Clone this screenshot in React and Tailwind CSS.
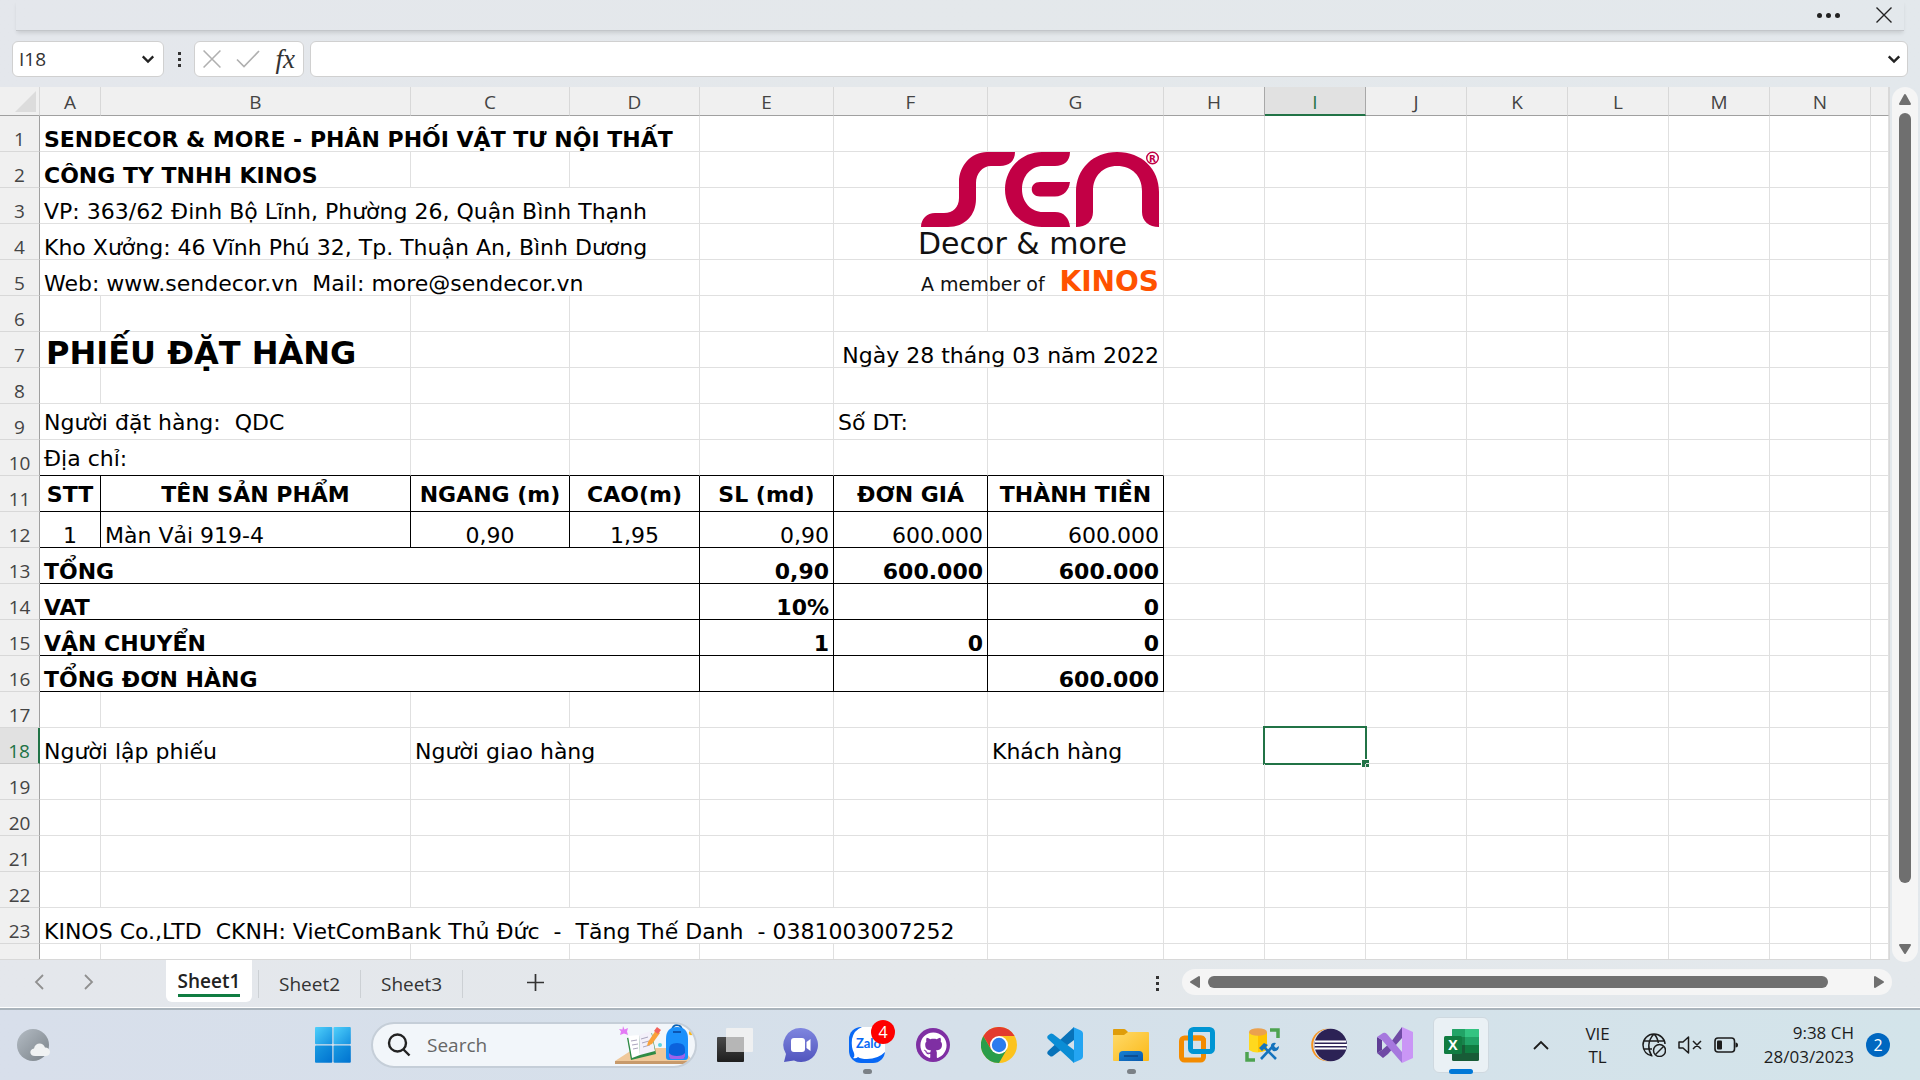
import React from "react";
import { FaGithub } from "react-icons/fa";

const SHEET_FONT = "font-['DejaVu_Sans',Verdana,sans-serif]";
const UI_FONT = "font-['Open_Sans','Noto_Sans',sans-serif]";

const columns = [
  { name: "A", width: "w-[61px]" },
  { name: "B", width: "w-[310px]" },
  { name: "C", width: "w-[159px]" },
  { name: "D", width: "w-[130px]" },
  { name: "E", width: "w-[134px]" },
  { name: "F", width: "w-[154px]" },
  { name: "G", width: "w-[176px]" },
  { name: "H", width: "w-[101px]" },
  { name: "I", width: "w-[101px]" },
  { name: "J", width: "w-[101px]" },
  { name: "K", width: "w-[101px]" },
  { name: "L", width: "w-[101px]" },
  { name: "M", width: "w-[101px]" },
  { name: "N", width: "w-[101px]" },
  { name: "", width: "" },
];

const c = (text, options = {}) => ({ text, span: 1, ...options });
const ruled = (text, options = {}) => c(text, { right: true, bottom: true, ...options });
const underlined = (text, options = {}) => c(text, { bottom: true, ...options });
const center = { align: "center" };
const head = { align: "center", bold: true, middle: true };
const boldRight = { align: "right", bold: true };

const rows = {
  1: [c("SENDECOR & MORE - PHÂN PHỐI VẬT TƯ NỘI THẤT", { span: 4, bold: true })],
  2: [c("CÔNG TY TNHH KINOS", { span: 2, bold: true })],
  3: [c("VP: 363/62 Đinh Bộ Lĩnh, Phường 26, Quận Bình Thạnh", { span: 4 })],
  4: [c("Kho Xưởng: 46 Vĩnh Phú 32, Tp. Thuận An, Bình Dương", { span: 4 })],
  5: [c("Web: www.sendecor.vn  Mail: more@sendecor.vn", { span: 4 })],
  7: [
    c("PHIẾU ĐẶT HÀNG", { span: 2, title: true, bold: true }),
    c(""),
    c(""),
    c(""),
    c("Ngày 28 tháng 03 năm 2022", { span: 2, align: "right" }),
  ],
  9: [
    c("Người đặt hàng:  QDC", { span: 2, middle: true }),
    c(""),
    c(""),
    c(""),
    c("Số DT:", { middle: true }),
  ],
  10: [
    underlined("Địa chỉ:", { span: 2, middle: true }),
    underlined(""),
    underlined(""),
    underlined(""),
    underlined(""),
    underlined(""),
  ],
  11: [
    ruled("STT", head),
    ruled("TÊN SẢN PHẨM", head),
    ruled("NGANG (m)", head),
    ruled("CAO(m)", head),
    ruled("SL (md)", head),
    ruled("ĐƠN GIÁ", head),
    ruled("THÀNH TIỀN", head),
  ],
  12: [
    ruled("1", center),
    ruled("Màn Vải 919-4"),
    ruled("0,90", center),
    ruled("1,95", center),
    ruled("0,90", { align: "right" }),
    ruled("600.000", { align: "right" }),
    ruled("600.000", { align: "right" }),
  ],
  13: [
    ruled("TỔNG", { span: 4, bold: true }),
    ruled("0,90", boldRight),
    ruled("600.000", boldRight),
    ruled("600.000", boldRight),
  ],
  14: [
    ruled("VAT", { span: 4, bold: true }),
    ruled("10%", boldRight),
    ruled(""),
    ruled("0", boldRight),
  ],
  15: [
    ruled("VẬN CHUYỂN", { span: 4, bold: true }),
    ruled("1", boldRight),
    ruled("0", boldRight),
    ruled("0", boldRight),
  ],
  16: [
    ruled("TỔNG ĐƠN HÀNG", { span: 4, bold: true }),
    ruled(""),
    ruled(""),
    ruled("600.000", boldRight),
  ],
  18: [
    c("Người lập phiếu", { span: 2 }),
    c("Người giao hàng", { span: 2 }),
    c(""),
    c(""),
    c("Khách hàng"),
    c(""),
    c("", { selected: true }),
  ],
  23: [c("KINOS Co.,LTD  CKNH: VietComBank Thủ Đức  -  Tăng Thế Danh  - 0381003007252", { span: 6 })],
};

function fillRow(n) {
  const cells = [...(rows[n] || [])];
  let used = cells.reduce((sum, cell) => sum + cell.span, 0);
  while (used < columns.length) {
    cells.push(c(""));
    used += 1;
  }
  return cells;
}

function Cell({ cell }) {
  const border = `${cell.right ? "border-r-black" : "border-r-[#e0e0e0]"} ${cell.bottom ? "border-b-black" : "border-b-[#e0e0e0]"}`;
  const justify =
    cell.align === "center" ? "justify-center" : cell.align === "right" ? "justify-end" : "justify-start";
  const vertical = cell.middle ? "items-center pt-0.5" : "items-end";
  const size = cell.title ? "text-[32px] leading-7 pl-1.5" : "text-[22px] leading-[22px] px-1";
  return (
    <td colSpan={cell.span} className={`relative border-r border-b p-0 ${border}`}>
      <div className={`flex h-[35px] whitespace-pre text-black ${justify} ${vertical} ${size} ${cell.bold ? "font-bold" : ""}`}>
        {cell.text}
      </div>
      {cell.selected && (
        <div className="absolute -left-0.5 -top-0.5 -right-0.5 -bottom-0.5 border-2 border-[#217346]">
          <span className="absolute -right-1 -bottom-1 size-2 border-t border-l border-white bg-[#217346]" />
        </div>
      )}
    </td>
  );
}

function SenLogo() {
  return (
    <svg className="absolute left-[921px] top-[65px] h-[146px] w-[242px] overflow-visible" viewBox="0 0 242 146" role="img" aria-label="SEN Decor & more">
      <g fill="#c20045">
        <path d="M94 0H66C50 0 38 14 38 30V46C38 55 32 61 23 61H14C6 61 0 67 0 75H27C44 75 55 63 55 47V31C55 22 61 14 70 14H79C88 14 94 9 94 0Z" />
        <path d="M149 0H121C100 0 84 17 84 37.500C84 58 100 75 121 75H149C148 66 143 60 134 60H122C110 60 101 50 101 37.500C101 24 110 14 122 14H134C143 14 149 9 149 0Z" />
        <path d="M149 30H119C108 30 108 44.500 119 44.500H134C143 44.500 148 38 149 30Z" />
        <path d="M155 75V40C155 17 172 0 196 0C221 0 238 17 238 40V75C228 75 221 69 221 60V39C221 24 211 14 196 14C182 14 172 24 172 39V60C172 69 165 75 155 75Z" />
      </g>
      <circle cx="231.500" cy="6" r="5.800" fill="white" stroke="#c20045" strokeWidth="1.400" />
      <text x="231.500" y="9.500" textAnchor="middle" fontSize="9" fontWeight="700" fontFamily="DejaVu Sans" fill="#c20045">R</text>
      <text x="-3" y="102" fontSize="30" fontFamily="DejaVu Sans" fill="#111">Decor &amp; more</text>
      <text x="0" y="139" fontSize="19" fontFamily="DejaVu Sans" fill="#111">A member of</text>
      <text x="238" y="139" textAnchor="end" fontSize="28" fontWeight="700" fontFamily="DejaVu Sans" fill="#ff5200">KINOS</text>
    </svg>
  );
}

function Chevron({ d, className, width = 2 }) {
  return (
    <svg className={className} viewBox="0 0 16 16" fill="none" stroke="currentColor" strokeWidth={width} aria-hidden="true">
      <path d={d} />
    </svg>
  );
}

function Arrow({ points, className }) {
  return (
    <svg className={className} viewBox="0 0 14 14" fill="#6f6f6f" stroke="#6f6f6f" strokeWidth="2" strokeLinejoin="round" aria-hidden="true">
      <polygon points={points} />
    </svg>
  );
}

function VerticalDots() {
  return (
    <span className="flex flex-col gap-[3px]">
      <span className="size-[3px] bg-[#333]" />
      <span className="size-[3px] bg-[#333]" />
      <span className="size-[3px] bg-[#333]" />
    </span>
  );
}

function TitleStrip() {
  return (
    <header className="mx-4 flex h-[31px] shrink-0 items-center justify-end gap-9 border-b border-[#c3c6ca] pr-3 shadow-[0_3px_4px_-1px_rgba(0,0,0,0.12)]">
      <button aria-label="More options" className="flex gap-1">
        <span className="size-[5px] rounded-full bg-[#222]" />
        <span className="size-[5px] rounded-full bg-[#222]" />
        <span className="size-[5px] rounded-full bg-[#222]" />
      </button>
      <button aria-label="Close" className="text-[#222]">
        <Chevron d="M0.500 0.500 15.500 15.500M15.500 0.500 0.500 15.500" width={1.4} className="size-4" />
      </button>
    </header>
  );
}

function FormulaBar() {
  return (
    <div className="flex h-14 shrink-0 items-center px-3">
      <div className="flex h-9 w-[152px] items-center rounded-md border border-[#d0d0d0] bg-white pr-2">
        <input aria-label="Name box" defaultValue="I18" className="w-full min-w-0 bg-transparent pl-1.5 text-[19px] text-[#333] outline-none" />
        <button aria-label="Open name list" className="text-[#222]">
          <Chevron d="M2 5 8 11 14 5" width={2.6} className="size-3.5" />
        </button>
      </div>
      <div className="flex w-[30px] justify-center"><VerticalDots /></div>
      <div className="flex h-9 w-[110px] items-center justify-between rounded-md border border-[#d0d0d0] bg-white px-2">
        <button aria-label="Cancel" className="text-[#b0b0b0]">
          <Chevron d="M0.500 0.500 15.500 15.500M15.500 0.500 0.500 15.500" width={1.4} className="size-[18px]" />
        </button>
        <button aria-label="Enter" className="text-[#b0b0b0]">
          <svg className="h-[18px] w-6" viewBox="0 0 24 18" fill="none" stroke="currentColor" strokeWidth="1.700" aria-hidden="true"><path d="M1 9.500 8 16.500 23 1" /></svg>
        </button>
        <button aria-label="Insert function" className="font-['Liberation_Serif',serif] text-[27px] leading-7 italic font-medium text-[#333]">fx</button>
      </div>
      <div className="ml-1.5 flex h-9 flex-1 items-center rounded-md border border-[#d0d0d0] bg-white pr-1.5">
        <input aria-label="Formula bar" className="w-full bg-transparent px-2 text-[19px] outline-none" />
        <button aria-label="Expand formula bar" className="text-[#222]">
          <Chevron d="M2 5 8 11 14 5" width={2.8} className="size-3.5" />
        </button>
      </div>
    </div>
  );
}

function Sheet() {
  return (
    <main className="flex min-h-0 flex-1">
      <div className="relative min-w-0 flex-1 overflow-hidden border-r border-b border-[#d8d8d8] bg-white">
        <table className={`w-full table-fixed border-separate border-spacing-0 ${SHEET_FONT}`}>
          <colgroup>
            <col className="w-10" />
            {columns.map((col, i) => <col key={i} className={col.width} />)}
          </colgroup>
          <thead>
            <tr className={`${UI_FONT} text-[19px] text-[#444]`}>
              <th className="h-[29px] border-r border-b border-r-[#d8d8d8] border-b-[#a0a0a0] bg-[#f0f0f0] p-0">
                <svg className="ml-auto mr-[3px] size-[21px]" viewBox="0 0 21 21" aria-hidden="true"><path d="M21 0V21H0Z" fill="#dcdcdc" /></svg>
              </th>
              {columns.map((col, i) => (
                <th
                  key={i}
                  className={
                    col.name === "I"
                      ? "border-r border-b-2 border-r-[#a8a8a8] border-b-[#217346] bg-[#e1e1e1] p-0 pt-0.5 font-normal leading-6 text-[#217346]"
                      : `border-r border-b border-b-[#a0a0a0] bg-[#f0f0f0] p-0 pt-0.5 font-normal leading-6 ${col.name === "H" ? "border-r-[#a8a8a8]" : "border-r-[#d8d8d8]"}`
                  }
                >
                  {col.name}
                </th>
              ))}
            </tr>
          </thead>
          <tbody>
            {Array.from({ length: 24 }, (_, i) => i + 1).map((n) => (
              <tr key={n}>
                <th
                  className={
                    n === 18
                      ? `border-r-2 border-b border-r-[#217346] border-b-[#c8c8c8] bg-[#e1e1e1] p-0 font-normal text-[#217346] ${UI_FONT}`
                      : `border-r border-b border-r-[#a0a0a0] border-b-[#d8d8d8] bg-[#f0f0f0] p-0 font-normal text-[#444] ${UI_FONT}`
                  }
                >
                  <div className="flex h-[35px] items-end justify-center text-[19px] leading-6">{n < 24 ? n : ""}</div>
                </th>
                {fillRow(n).map((cell, i) => <Cell key={i} cell={cell} />)}
              </tr>
            ))}
          </tbody>
        </table>
        <SenLogo />
      </div>
      <div className="ml-0.5 mr-0.5 -mb-0.5 flex w-[26px] flex-col items-center rounded-full bg-[#f5f5f5] py-1.5">
        <Arrow points="7,2 12,11 2,11" className="size-3.5" />
        <div className="mt-1.5 w-3 flex-[770] rounded-full bg-[#6f6f6f]" />
        <div className="flex-[59]" />
        <Arrow points="2,3 12,3 7,11" className="size-3.5" />
      </div>
    </main>
  );
}

function SheetTabs() {
  return (
    <nav aria-label="Sheets" className="flex h-12 shrink-0 items-start border-b border-white">
      <div className="flex w-[166px] items-center gap-8 pt-3.5 pl-8 text-[#909090]">
        <button aria-label="Previous sheet"><Chevron d="M11 1 4 8 11 15" width={1.8} className="size-4" /></button>
        <button aria-label="Next sheet"><Chevron d="M5 1 12 8 5 15" width={1.8} className="size-4" /></button>
      </div>
      <button className="flex h-[42px] w-[86px] items-start justify-center rounded-b-md bg-white pt-2 text-[19px] leading-[26px] font-semibold text-[#222]">
        <span className="block border-b-3 border-[#107c41]">Sheet1</span>
      </button>
      <button className="mt-2.5 ml-1.5 h-7 w-[103px] border-x border-[#ccd0d4] text-[19px] leading-7 text-[#333]">Sheet2</button>
      <button className="mt-2.5 h-7 w-[102px] border-r border-[#ccd0d4] text-[19px] leading-7 text-[#333]">Sheet3</button>
      <button aria-label="New sheet" className="mt-3.5 ml-16 text-[#333]">
        <Chevron d="M8 0V16M0 8H16" width={1.6} className="size-[17px]" />
      </button>
      <div className="ml-auto mt-4"><VerticalDots /></div>
      <div className="mt-[9px] mr-7 ml-[23px] flex h-[26px] w-[37%] items-center rounded-full bg-[#f5f5f5] px-1.5">
        <Arrow points="3,7 11,2 11,12" className="size-3.5" />
        <div className="ml-1.5 h-3 flex-[622] rounded-full bg-[#6f6f6f]" />
        <div className="flex-[44]" />
        <Arrow points="11,7 3,2 3,12" className="size-3.5" />
      </div>
    </nav>
  );
}

function WindowsIcon() {
  return (
    <svg viewBox="0 0 36 36" className="size-9" aria-hidden="true">
      <defs>
        <linearGradient id="win" x1="0" y1="0" x2="1" y2="1"><stop stopColor="#4fd0fb" /><stop offset="1" stopColor="#1691e0" /></linearGradient>
        <linearGradient id="win2" x1="0" y1="0" x2="1" y2="1"><stop stopColor="#199be2" /><stop offset="1" stopColor="#0072d0" /></linearGradient>
      </defs>
      <rect x="0" y="0" width="17.300" height="17.300" rx="1" fill="url(#win)" />
      <rect x="18.500" y="0" width="17.300" height="17.300" rx="1" fill="url(#win)" />
      <rect x="0" y="18.500" width="17.300" height="17.300" rx="1" fill="url(#win2)" />
      <rect x="18.500" y="18.500" width="17.300" height="17.300" rx="1" fill="url(#win2)" />
    </svg>
  );
}

function WeatherIcon() {
  return (
    <svg viewBox="0 0 36 34" className="h-[34px] w-9" aria-hidden="true">
      <defs><linearGradient id="moon" x1="0" y1="0" x2="1" y2="1"><stop stopColor="#b4bcc4" /><stop offset="1" stopColor="#7a8289" /></linearGradient></defs>
      <circle cx="17" cy="17" r="16" fill="url(#moon)" />
      <path d="M19 28c-6 0-6-7-1-7.500 1-6 9-7 11-1 6 0 7 8 1 8.500z" fill="#f0f2f3" />
    </svg>
  );
}

function SearchArt() {
  return (
    <svg viewBox="0 0 80 42" className="h-[42px] w-20 shrink-0" aria-hidden="true">
      <path d="M0 37 20 24H67L78 37Z" fill="#f0c99b" />
      <path d="M0 37H78L72 40H0Z" fill="#c79a6c" />
      <path d="m12 14 4 22 25-6-4-21z" fill="#2f8b45" />
      <path d="m13 12 11-1 1 20-8 3z" fill="#fff" />
      <path d="m24 11 12-4 4 20-15 4z" fill="#f3f0fa" />
      <path d="m16 17 6-1m-5 5 6-1m-5 5 5-1m3-9 7-2m-6 6 7-2m-6 6 7-2" stroke="#aaa5bd" strokeWidth="1" />
      <path d="m33 18 8-12 4 3-8 11-5 2z" fill="#f9a13a" />
      <path d="m39 7 3-4 4 3-3 4z" fill="#f3625c" />
      <path d="m8 2 1.500 3.500L13 4l-1 3.500 1 3.500-4-1.500L5 11l1-3.500L4 5l3.500.500z" fill="#e37bf5" />
      <path d="M57 7c0-8 10-8 10 0" fill="none" stroke="#0c63b5" strokeWidth="2" />
      <path d="M51 15Q51 3 62 3T73 15V33Q73 36 70 36H54Q51 36 51 33Z" fill="#1a90fb" />
      <path d="M54 25q0-6 8-6t8 6v9H54z" fill="#0b62dc" />
      <path d="M54 29q2 3 8 3t8-3v3q0 3-3 3H57q-3 0-3-3z" fill="#a063ea" />
      <path d="M58 8h8" stroke="#0b55b2" strokeWidth="2" />
      <circle cx="76" cy="9" r="2.200" fill="#f8b51b" />
      <circle cx="45" cy="21" r="2" fill="#5cd3e2" />
    </svg>
  );
}

function TaskViewIcon() {
  return (
    <svg viewBox="0 0 36 36" className="size-9" aria-hidden="true">
      <defs><linearGradient id="tv" x1="0" y1="0" x2="0" y2="1"><stop stopColor="#4a4a4a" /><stop offset="1" stopColor="#1e1e1e" /></linearGradient></defs>
      <rect x="0" y="10" width="27" height="25" rx="1" fill="url(#tv)" />
      <rect x="9" y="1" width="27" height="24" rx="1" fill="#f1f1f1" opacity=".92" />
      <rect x="9" y="10" width="18" height="15" fill="#b6b6b6" />
    </svg>
  );
}

function ChatIcon() {
  return (
    <svg viewBox="0 0 36 36" className="size-9" aria-hidden="true">
      <defs><linearGradient id="chat" x1="0" y1="0" x2="0" y2="1"><stop stopColor="#7f86df" /><stop offset="1" stopColor="#5155be" /></linearGradient></defs>
      <path d="M18 1a17 17 0 1 1-7 32.500L1 35l2-8A17 17 0 0 1 18 1z" fill="url(#chat)" />
      <rect x="8" y="11" width="14" height="14" rx="3" fill="white" />
      <path d="m23.500 15 4-3v12l-4-3z" fill="white" />
    </svg>
  );
}

function ZaloIcon() {
  return (
    <svg viewBox="0 0 36 36" className="size-9" aria-hidden="true">
      <rect width="36" height="36" rx="12" fill="#0868f5" />
      <path d="M13 0H24Q36 0 36 12V25Q29 32 18 32Q12 32 9 30Q7 32 4 31Q6 30 5 26Q2 20 3 12Q5 3 13 0Z" fill="white" />
      <text x="19.500" y="21" textAnchor="middle" fontFamily="Lato, sans-serif" fontSize="13" fontWeight="700" fill="#0868f5">Zalo</text>
    </svg>
  );
}

function GithubIcon() {
  return (
    <span className="flex size-[34px] items-center justify-center rounded-full bg-[#7f2fa3]">
      <FaGithub className="size-[27px] text-white" />
    </span>
  );
}

function ChromeIcon() {
  return (
    <svg viewBox="0 0 36 36" className="size-9" aria-hidden="true">
      <circle cx="18" cy="18" r="18" fill="#fcc31e" />
      <path d="M2.400 9A18 18 0 0 0 18 36L25.800 22.500 18 27 10.200 22.500Z" fill="#2a9d4a" />
      <path d="M2.400 9A18 18 0 0 1 33.600 9H18L10.200 22.500Z" fill="#e33b2e" />
      <circle cx="18" cy="18" r="9" fill="white" />
      <circle cx="18" cy="18" r="7.200" fill="#2c7cee" />
    </svg>
  );
}

function VsCodeIcon() {
  return (
    <svg viewBox="0 0 36 36" className="size-9" aria-hidden="true">
      <path d="M27 0 1 24Q-.500 26 1 27.500L3 29Q4 30 6 29L27 13Z" fill="#0872b9" />
      <path d="M27 36 1 12Q-.500 10 1 8.500L3 7Q4 6 6 7L27 23Z" fill="#0b8dd5" />
      <path d="m26 0 8 3.500q2 1 2 3v23q0 2-2 3L26 36q1-1 1-3V3q0-2-1-3z" fill="#24a5f2" />
    </svg>
  );
}

function ExplorerIcon() {
  return (
    <svg viewBox="0 0 36 36" className="size-9" aria-hidden="true">
      <defs>
        <linearGradient id="folder" x1="0" y1="0" x2="1" y2="1"><stop stopColor="#ffda69" /><stop offset="1" stopColor="#fbb919" /></linearGradient>
        <linearGradient id="folderTag" x1="0" y1="0" x2="1" y2="1"><stop stopColor="#1681d4" /><stop offset="1" stopColor="#0a5aad" /></linearGradient>
      </defs>
      <path d="M0 3q0-1 1-1h10q1 0 2 1l3 3v4H0z" fill="#df9d0a" />
      <path d="M0 8h11l4-3h20q1 0 1 1v27q0 1-1 1H1q-1 0-1-1z" fill="url(#folder)" />
      <path d="M6 34v-6q0-4 4-4h16q4 0 4 4v6z" fill="url(#folderTag)" />
      <path d="M11 29h14" stroke="#0b4484" strokeWidth="1.500" />
    </svg>
  );
}

function VmwareIcon() {
  return (
    <svg viewBox="0 0 36 36" className="size-9" fill="none" strokeWidth="5" aria-hidden="true">
      <rect x="2.500" y="11" width="22" height="22" rx="3" stroke="#f38b00" />
      <rect x="11.500" y="2.500" width="22" height="22" rx="3" stroke="#0095d3" />
      <path d="M14 11h8q2.500 0 2.500 3v5" stroke="#f38b00" />
    </svg>
  );
}

function DatabaseToolIcon() {
  return (
    <svg viewBox="0 0 36 36" className="size-9" aria-hidden="true">
      <path d="M4 5v18q8 5 17 0V5z" fill="#ffd91e" />
      <path d="M13 8v17q5 0 9-2V5z" fill="#ffc400" />
      <ellipse cx="13" cy="5" rx="9" ry="3.800" fill="#eba14e" />
      <path d="M25 3h8v8M2 25v8h8" fill="none" stroke="#4da350" strokeWidth="3.500" />
      <path d="m16 32 12-13m3 13L18 19" stroke="#1473bd" strokeWidth="2.600" />
      <path d="m14 21 5-5 4 2-6 6zM26 21q-1-6 5-5l-2 3 2 2 3-2q0 6-6 5z" fill="#1473bd" />
    </svg>
  );
}

function EclipseIcon() {
  return (
    <svg viewBox="0 0 36 36" className="size-9" aria-hidden="true">
      <circle cx="16.500" cy="18" r="16.300" fill="#f7931e" />
      <circle cx="18.500" cy="18" r="16.300" fill="#d9dfea" />
      <circle cx="19.700" cy="18" r="16.200" fill="#2c2255" />
      <path d="M4 14.500h31M3.500 18H36M4 21.500h31" stroke="white" strokeWidth="2" />
    </svg>
  );
}

function VisualStudioIcon() {
  return (
    <svg viewBox="0 0 36 36" className="size-9" aria-hidden="true">
      <path d="M25 0 14 15 5 23 0 26 6 31 11 27 25 11Z" fill="#6f4aa5" />
      <path d="M0 10 5 13V23L0 26Z" fill="#5f3d95" />
      <path d="M0 10 6 6Q8 5 10 7L25 25V36L5 13Z" fill="#a678de" />
      <path d="M25 0 36 5V31L25 36Z" fill="#ca96f6" />
    </svg>
  );
}

function ExcelIcon() {
  return (
    <svg viewBox="0 0 36 36" className="size-9" aria-hidden="true">
      <rect x="9" y="2" width="27" height="32" rx="1.500" fill="#185c37" />
      <path d="M9 3q0-1 1-1h12v8H9z" fill="#21a366" />
      <path d="M22 2h13q1 0 1 1v7H22z" fill="#33c481" />
      <path d="M9 10h13v8H9z" fill="#18834b" />
      <path d="M22 10h14v8H22z" fill="#21a366" />
      <path d="M22 18h14v8H22z" fill="#107c41" />
      <rect x="1" y="9" width="18" height="18" rx="1.500" fill="#107c41" />
      <text x="10" y="23" textAnchor="middle" fontFamily="Open Sans, sans-serif" fontSize="14" fontWeight="700" fill="white">X</text>
    </svg>
  );
}

const apps = [
  { name: "Task View", icon: <TaskViewIcon /> },
  { name: "Chat", icon: <ChatIcon /> },
  { name: "Zalo", icon: <ZaloIcon />, badge: "4", running: true },
  { name: "GitHub Desktop", icon: <GithubIcon /> },
  { name: "Chrome", icon: <ChromeIcon /> },
  { name: "Visual Studio Code", icon: <VsCodeIcon /> },
  { name: "File Explorer", icon: <ExplorerIcon />, running: true },
  { name: "VMware", icon: <VmwareIcon /> },
  { name: "Database tools", icon: <DatabaseToolIcon /> },
  { name: "Eclipse", icon: <EclipseIcon /> },
  { name: "Visual Studio", icon: <VisualStudioIcon /> },
  { name: "Excel", icon: <ExcelIcon />, active: true },
];

function AppButton({ app }) {
  return (
    <button
      aria-label={app.name}
      className={`relative flex size-14 items-center justify-center rounded-md ${app.active ? "border border-[#cfd9e0] bg-[#eaf1f5]" : ""}`}
    >
      {app.icon}
      {app.badge && (
        <span className="absolute right-0 top-[3px] flex size-6 items-center justify-center rounded-full bg-[#fe0000] text-base text-white">
          {app.badge}
        </span>
      )}
      {app.running && <span className="absolute -bottom-px h-[5px] w-[9px] rounded-full bg-[#7b8187]" />}
      {app.active && <span className="absolute -bottom-0.5 h-[5px] w-6 rounded-full bg-[#0078d7]" />}
    </button>
  );
}

function TrayIcons() {
  return (
    <div className="flex items-center gap-3 text-[#1c1c1c]">
      <svg viewBox="0 0 24 24" className="size-6" fill="none" stroke="currentColor" strokeWidth="1.500" aria-label="No internet">
        <path d="M10.500 23C5 22 1 18 1 12 1 6 6 1 12 1s11 5 11 10M2 8h20M2 16h8M12 1C5 8 6 17 9.500 22.500M12 1c3 3 4 6 4.300 9" />
        <circle cx="17.500" cy="17.500" r="6" />
        <path d="m13.500 21.500 8-8" />
      </svg>
      <svg viewBox="0 0 24 24" className="size-6" fill="none" stroke="currentColor" strokeWidth="1.500" strokeLinejoin="round" aria-label="Muted">
        <path d="M1 9h4l5.500-5v16L5 15H1zM15 8l8 8M23 8l-8 8" />
      </svg>
      <svg viewBox="0 0 24 24" className="size-6" aria-label="Battery">
        <rect x="1" y="5" width="19.500" height="14" rx="3" fill="none" stroke="currentColor" strokeWidth="1.600" />
        <rect x="3" y="7.500" width="5" height="9" rx="1" fill="currentColor" />
        <path d="M21.500 9.500q2.500 0 2.500 2.500t-2.500 2.500z" fill="currentColor" />
      </svg>
    </div>
  );
}

function Taskbar() {
  return (
    <footer className="flex h-[72px] shrink-0 items-center justify-between border-t-2 border-[#a9b3bb] bg-linear-to-r from-[#d8dfeb] via-[#d5e0ea] to-[#d3e4ea] pl-4 pr-[30px]">
      <div className="flex items-center gap-[10px]">
        <div className="w-[279px]">
          <button aria-label="Weather" className="block"><WeatherIcon /></button>
        </div>
        <button aria-label="Start" className="flex size-14 items-center justify-center"><WindowsIcon /></button>
        <label className="flex h-[46px] w-[326px] items-center overflow-hidden rounded-full border-2 border-[#c5ced8] bg-[#f2f6fa] pl-3.5">
          <svg viewBox="0 0 24 24" className="size-6 shrink-0" fill="none" stroke="#222" strokeWidth="2.400" aria-hidden="true"><circle cx="10.500" cy="10" r="8.500" /><path d="m16.500 16.500 6 6" /></svg>
          <input aria-label="Search" placeholder="Search" className="min-w-0 flex-1 bg-transparent pl-4 text-[19px] outline-none placeholder:text-[#666]" />
          <SearchArt />
        </label>
        {apps.map((app) => <AppButton key={app.name} app={app} />)}
      </div>
      <div className="flex items-center text-[17px] leading-6 text-[#1c1c1c]">
        <button aria-label="Show hidden icons" className="mr-9"><Chevron d="M1 12 8 5 15 12" width={1.8} className="size-4" /></button>
        <button className="mr-8 text-center leading-[23px]"><span className="block">VIE</span><span className="block">TL</span></button>
        <TrayIcons />
        <button className="ml-[26px] text-right leading-6"><span className="block">9:38 CH</span><span className="block">28/03/2023</span></button>
        <button aria-label="2 notifications" className="ml-3 flex size-6 items-center justify-center rounded-full bg-[#0067c0] text-base text-white">2</button>
      </div>
    </footer>
  );
}

export default function App() {
  return (
    <div className={`flex h-screen flex-col overflow-hidden bg-linear-to-r from-[#e4e7ec] via-[#e4e8eb] to-[#e3e8ec] ${UI_FONT}`}>
      <TitleStrip />
      <FormulaBar />
      <Sheet />
      <SheetTabs />
      <Taskbar />
    </div>
  );
}
